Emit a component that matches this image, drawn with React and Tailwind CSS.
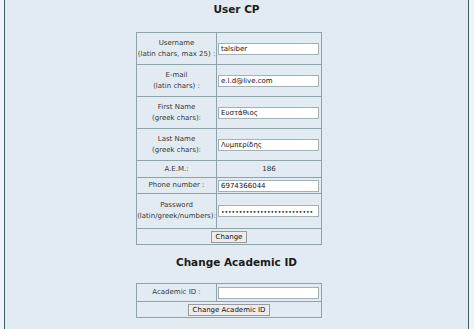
import React from "react";

const font = { fontFamily: '"DejaVu Sans", Verdana, sans-serif' };

const Field = ({ value, type = "text", small = false }) => (
  <input
    type={type}
    readOnly
    value={value}
    className={`block h-[12px] w-[101px] border border-[#a3b0b6] bg-white px-[2px] text-[#111] outline-none ${
      small ? "text-[6px]" : "text-[7px]"
    }`}
    style={font}
  />
);

const Row = ({ label, sub, h, children, last = false }) => (
  <div className={`flex ${last ? "" : "border-b border-[#8ea2aa]"}`} style={{ height: h }}>
    <div className="flex w-[80px] flex-col items-center justify-center border-r border-[#8ea2aa] text-[7px] leading-[11px] text-[#383838]">
      <span>{label}</span>
      {sub && <span>{sub}</span>}
    </div>
    <div className="flex flex-1 items-center pl-[1px]">{children}</div>
  </div>
);

const Button = ({ children }) => (
  <button
    className="h-[12px] border border-[#9a9a9a] bg-[#ececec] px-[4px] text-[7px] leading-[10px] text-[#111]"
    style={font}
  >
    {children}
  </button>
);

export default function App() {
  const accounts = [
    { label: "Username", sub: "(latin chars, max 25) :", value: "talsiber", h: 32 },
    { label: "E-mail", sub: "(latin chars) :", value: "e.l.d@live.com", h: 32 },
    { label: "First Name", sub: "(greek chars):", value: "Ευστάθιος", h: 32 },
    { label: "Last Name", sub: "(greek chars):", value: "Λυμπερίδης", h: 32 },
  ];

  return (
    <div className="h-[329px] w-[474px] bg-[#edf3f6] pl-[4px] pr-[5px]" style={font}>
      <div className="h-full border-x border-[#3d5961] bg-[#e1ebf1]">
        <h1 className="pt-[3px] text-center text-[10.5px] font-bold leading-[13px] text-[#1c1c1c]">
          User CP
        </h1>

        {/* Account form */}
        <div className="ml-[131px] mt-[16px] w-[186px] border border-[#8ea2aa]">
          {accounts.map((a) => (
            <Row key={a.label} label={a.label} sub={a.sub} h={a.h}>
              <Field value={a.value} />
            </Row>
          ))}
          <Row label="A.E.M.:" h={17}>
            <div className="w-full pr-[1px] text-center text-[7px] text-[#333]">186</div>
          </Row>
          <Row label="Phone number :" h={16}>
            <Field value="6974366044" />
          </Row>
          <Row label="Password" sub="(latin/greek/numbers):" h={35}>
            <Field type="password" small value="aaaaaaaaaaaaaaaaaaaaaaaaaa" />
          </Row>
          <div className="flex h-[15px] items-center justify-center">
            <Button>Change</Button>
          </div>
        </div>

        <h2 className="mt-[11px] text-center text-[10.5px] font-bold leading-[13px] text-[#1c1c1c]">
          Change Academic ID
        </h2>

        {/* Academic ID form */}
        <div className="ml-[131px] mt-[14px] w-[186px] border border-[#8ea2aa]">
          <Row label="Academic ID :" h={18}>
            <Field value="" />
          </Row>
          <div className="flex h-[15px] items-center justify-center">
            <Button>Change Academic ID</Button>
          </div>
        </div>
      </div>
    </div>
  );
}
